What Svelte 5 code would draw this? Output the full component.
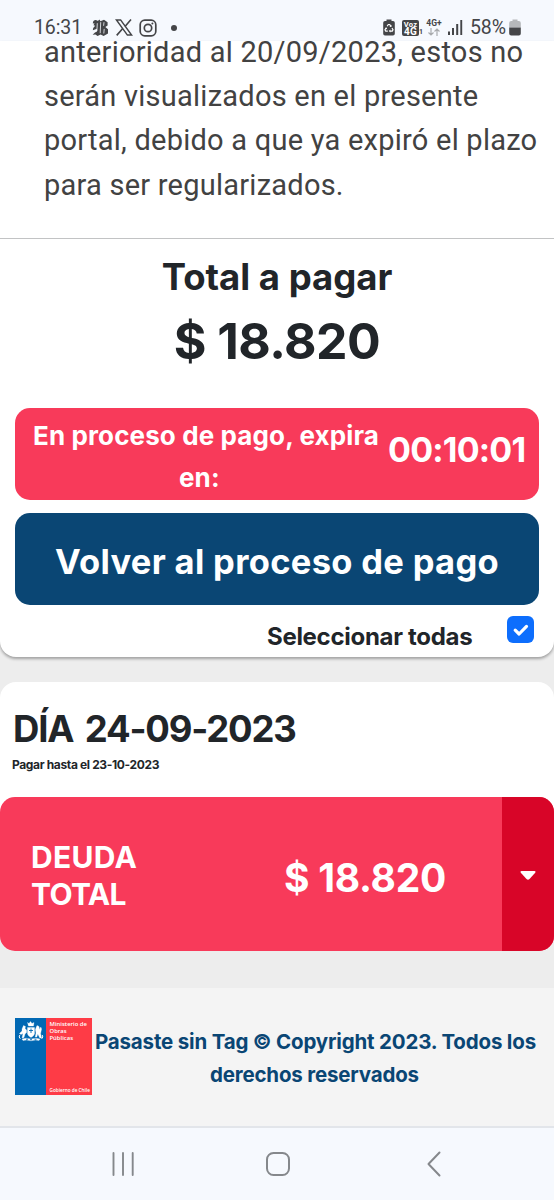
<script>
  const paragraph = [
    'anterioridad al 20/09/2023, estos no',
    'serán visualizados en el presente',
    'portal, debido a que ya expiró el plazo',
    'para ser regularizados.'
  ];
  let selected = $state(true);
</script>

<div class="screen">
  <header class="status">
    <span class="time">16:31</span>
    <svg class="news" width="17" height="18" viewBox="0 0 17 18" fill="#444548">
      <path d="M.8 4.500C1 1.500 3 .6 4.800 1.400c1.200.6 2 .2 2.800-.8l.8 1.600L12 .8l3.600 2.400v3.300L13.300 8l2.700 2.300v4.200l-4.400 2.600-3-1.600-3 1.500-2.200-1.400-2.800.2 2.400-2.400 2-1V9.800L.8 11.200 1.200 9l2-2.200-1.700-.6 1-2z" />
      <path d="M5.300 4.200 4.900 12M8.700 3.200l-.5 11M12 3.200l-.4 3.600M12.200 9.900l-.4 4.600" stroke="#f6f9fe" stroke-width=".8" fill="none" />
    </svg>
    <svg class="x" width="18" height="17" viewBox="0 0 18 17" fill="none" stroke="#444548">
      <path d="M1.400.9h4.200l11 15.200h-4.200z" stroke-width="1.500" />
      <path d="M16 .6 10 7.500M7.500 9.800 1.700 16.400" stroke-width="1.600" />
    </svg>
    <svg class="insta" width="18" height="18" viewBox="0 0 18 18" fill="none" stroke="#444548" stroke-width="1.700">
      <rect x="1.200" y="1.200" width="15.600" height="15.600" rx="4.600" />
      <circle cx="9" cy="9" r="3.700" />
      <circle cx="13.400" cy="4.600" r="1" fill="#444548" stroke="none" />
    </svg>
    <i class="dot"></i>
    <svg class="saver" width="12" height="17" viewBox="0 0 12 17">
      <path d="M3.500 2V.5h5V2H10a1.800 1.800 0 0 1 1.800 1.800v11A1.800 1.800 0 0 1 10 16.600H2A1.800 1.800 0 0 1 .2 14.800v-11A1.800 1.800 0 0 1 2 2z" fill="#444548" />
      <path d="m4.200 7.300 1.100-1.800h1.400L8 7.600M9 9l1 1.800-.7 1.300H7M4.800 12.100H2.700L2 10.800 3.100 9" fill="none" stroke="#fff" stroke-width="1.200" />
      <path d="m8.600 6.100-.3 2-1.900-.8zM7.400 10.600v3l-1.600-1.500zM1.800 9l2-.6.4 2z" fill="#fff" />
    </svg>
    <span class="volte"><b>Voz</b><b class="g">4G</b></span><span class="sim">1</span>
    <span class="net"><b>4G+</b>
      <svg width="12" height="8" viewBox="0 0 12 8" fill="none" stroke="#a8aaad" stroke-width="1.200"><path d="M3 0v7M.5 4.500 3 7l2.500-2.500M9 8V1M6.500 3.500 9 1l2.500 2.500" /></svg>
    </span>
    <svg class="signal" width="15" height="15" viewBox="0 0 15 15" fill="#444548"><path d="M0 11.500h2V15H0zM4 8h2v7H4zM8.200 4h2v11h-2z" /><path d="M12.300 0h1.900v15h-1.900z" /></svg>
    <span class="pct">58%</span>
    <svg class="battery" width="12" height="17" viewBox="0 0 12 17">
      <path d="M3.500 2V.5h5V2h1.300a2 2 0 0 1 2 2v4.500H.2V4a2 2 0 0 1 2-2z" fill="#b5b7ba" />
      <path d="M.2 8.500h11.600v6a2 2 0 0 1-2 2H2.200a2 2 0 0 1-2-2z" fill="#444548" />
    </svg>
  </header>

  <main>
    <section class="summary">
      <div class="copy">
        {#each paragraph as line, i}<p class="l{i}">{line}</p>{/each}
      </div>
      <h2>Total a pagar</h2>
      <div class="total">$ 18.820</div>
      <div class="timer">
        <div class="expires"><span>En proceso de pago, expira</span><span class="en">en:</span></div>
        <strong>00:10:01</strong>
      </div>
      <button class="back">Volver al proceso de pago</button>
      <div class="select">
        <span>Seleccionar todas</span>
        <button class="check" class:on={selected} aria-label="Seleccionar todas" onclick={() => (selected = !selected)}>
          <svg width="27" height="27" viewBox="0 0 27 27" fill="none" stroke="#fff" stroke-width="3.200" stroke-linecap="round" stroke-linejoin="round"><path d="m8.200 14.200 3.900 3.800 7.400-7.600" /></svg>
        </button>
      </div>
    </section>

    <section class="day">
      <h1>DÍA 24-09-2023</h1>
      <p>Pagar hasta el 23-10-2023</p>
    </section>
    <div class="debtwrap">
      <div class="debt">
        <div class="label"><span>DEUDA</span><span class="tot">TOTAL</span></div>
        <div class="amount">$ 18.820</div>
        <button class="toggle" aria-label="Detalle">
          <svg width="18" height="11" viewBox="0 0 18 11"><path d="M2.500 1h13q1.800.3.700 1.700l-5.700 6.300q-1.500 1.500-3 0L1.800 2.700Q.7 1.300 2.500 1z" fill="#fff" /></svg>
        </button>
      </div>
    </div>
  </main>

  <footer>
    <div class="logo">
      <div class="blue">
        <svg width="26" height="21" viewBox="0 0 26 21">
          <g fill="#fff" stroke="#fff" stroke-width=".3">
            <path d="m9.500 1.500 1.500 1 1.500-2 1.500 2 2-1-.5 3.500h-5z" />
            <path d="M9.500 6.500h7V13q-1 2.500-3.500 3.500-2.500-1-3.500-3.500z" />
            <path d="M4 8 5.500 4.500l2 1-.5 2L8.600 9v2.500L7 13l-1 3.500-2 .5 1-4.500-2 1-1.600-1L4 10zM17.400 8.500 19 4.500l2 1 .6 3 1.200-2.500.8 2-1 4.500 1 4.500h-1.800l-2-4-1 3h-1.600l.8-4z" />
            <path d="m4 18 4-.8 5 .8 5-.8 4 .8-1 1.500-3.500-.4-4.500.7-4.500-.7-3.500.4z" />
          </g>
          <path d="M11 9.500h4M13 7.500v4.500M8 18.200h2M12 18.700h2M16.500 18.200h2" stroke="#0168b3" stroke-width=".9" />
          <path d="M1.800 14q-1.500 2 .5 3.800M24.200 14q1.500 2-.5 3.800" fill="none" stroke="#fff" stroke-width="1" />
        </svg>
      </div>
      <div class="red"><p>Ministerio de<br />Obras<br />Públicas</p><small>Gobierno de Chile</small></div>
    </div>
    <div class="copyright"><span>Pasaste sin Tag © Copyright 2023. Todos los</span><span class="second">derechos reservados</span></div>
  </footer>

  <nav>
    <svg width="24" height="26" viewBox="0 0 24 26" stroke="#85888c" stroke-width="1.900" stroke-linecap="round"><path d="M2.500 2v22M12 2v22M21.700 2v22" /></svg>
    <svg class="home" width="26" height="26" viewBox="0 0 26 26" fill="none" stroke="#85888c" stroke-width="2"><rect x="2" y="2" width="22" height="22" rx="6.500" /></svg>
    <svg width="16" height="26" viewBox="0 0 16 26" fill="none" stroke="#85888c" stroke-width="2" stroke-linecap="round" stroke-linejoin="round"><path d="M13.500 1.500 2.500 13l11 11.500" /></svg>
  </nav>
</div>

<style>
  :global(body) { background: #ededed; }
  .screen { width: 554px; height: 1200px; overflow: hidden; display: flex; flex-direction: column; font-family: Inter, "Liberation Sans", sans-serif; font-weight: 700; color: #212529; background: #ededed; }
  .screen * { box-sizing: border-box; }
  p, h1, h2 { margin: 0; font-weight: inherit; }
  button { border: 0; padding: 0; font: inherit; color: inherit; display: block; }
  span { white-space: nowrap; }
  svg { flex: none; display: block; }

  .status { height: 41px; flex: none; background: #f6f9fe; display: flex; align-items: center; padding: 14px 0 0 34px; color: #444548; font-family: Roboto, sans-serif; font-weight: 400; }
  .time { font-size: 19.500px; width: 58px; line-height: 20px; letter-spacing: -.1px; }
  .x { margin-left: 6px; }
  .insta { margin-left: 6px; }
  .dot { width: 6px; height: 6px; border-radius: 50%; background: #444548; margin-left: 14px; }
  .saver { margin-left: 206px; }
  .volte { width: 17px; height: 16px; border-radius: 2px; background: #444548; color: #fff; margin-left: 7px; display: flex; flex-direction: column; align-items: center; font-size: 7.500px; line-height: 7px; padding-top: 1px; letter-spacing: .3px; }
  .volte .g { font-size: 10px; line-height: 8px; }
  .sim { font-size: 7px; width: 3px; font-weight: 700; align-self: flex-end; line-height: 9px; margin-bottom: 4px; }
  .net { margin-left: 3px; width: 18px; font-size: 8.500px; line-height: 9px; display: flex; flex-direction: column; align-items: center; }
  .signal { margin-left: 5px; }
  .pct { font-size: 19.500px; line-height: 20px; margin-left: 7px; width: 37px; letter-spacing: -.1px; }
  .battery { margin-left: 2px; }

  main { height: 947px; flex: none; }
  .summary { position: relative; height: 616px; background: #fff; border-radius: 0 0 16px 16px; box-shadow: 0 2px 3px rgba(0, 0, 0, .32); }
  .copy { height: 198px; border-bottom: 1.500px solid #c2c3c4; padding-left: 44px; color: #424242; font-family: Roboto, sans-serif; font-size: 29px; font-weight: 400; letter-spacing: .24px; overflow: hidden; }
  .copy p { line-height: 44.300px; white-space: nowrap; }
  .copy .l0 { margin-top: -11.200px; }
  h2 { font-size: 36.500px; line-height: 50px; padding-top: 13px; height: 63px; text-align: center; }
  .total { font-size: 50px; line-height: 60px; padding-top: 9px; height: 106px; text-align: center; letter-spacing: -.5px; }
  .timer { margin: 0 15px; height: 92px; border-radius: 15px; background: #f83a5a; color: #fff; display: flex; padding: 7px 0 0 18px; }
  .expires { width: 347px; display: flex; flex-direction: column; align-items: flex-start; font-size: 26px; line-height: 41.500px; letter-spacing: .12px; }
  .en { margin-left: 146px; }
  .timer strong { font-size: 34px; font-weight: 700; line-height: 46px; margin: 12px 0 0 8px; letter-spacing: -.8px; }
  .back { margin: 13px 15px 0; width: 524px; height: 92px; border-radius: 15px; background: #0a4674; color: #fff; font-size: 34.500px; padding-top: 4px; letter-spacing: .32px; }
  .select { display: flex; padding-left: 267px; font-size: 24px; letter-spacing: -.3px; }
  .select span { width: 240px; line-height: 34px; margin-top: 15px; }
  .check { width: 27px; height: 27px; margin-top: 11px; border-radius: 6px; background: #fff; }
  .check.on { background: #0d6efd; }

  .day { margin-top: 25px; height: 115px; background: #fff; border-radius: 16px 16px 0 0; padding: 22px 12px 0; }
  h1 { font-size: 36.500px; line-height: 50px; letter-spacing: -1.200px; word-spacing: 4px; padding-left: 1px; white-space: nowrap; }
  .day p { font-size: 12px; line-height: 18px; margin-top: 2px; letter-spacing: -.36px; }
  .debtwrap { background: linear-gradient(#fff 0 50%, #ededed 50%); }
  .debt { height: 153.500px; border-radius: 15px; overflow: hidden; background: #f83a5a; color: #fff; display: flex; }
  .label { padding: 42px 0 0 31px; width: 284px; display: flex; flex-direction: column; align-items: flex-start; font-size: 30px; line-height: 37px; letter-spacing: .3px; }
  .tot { letter-spacing: -.6px; }
  .amount { width: 218px; font-size: 39px; line-height: 50px; padding-top: 56px; letter-spacing: -.3px; }
  .toggle { width: 52px; background: #d80528; display: grid; place-items: center; padding-top: 4px; }

  footer { flex: none; height: 138px; background: #f4f4f4; padding: 30px 15px 0 15px; display: flex; color: #0a4674; }
  .logo { width: 77px; height: 77px; display: flex; flex: none; }
  .blue { width: 31px; background: #0168b3; padding: 3px 0 0 3px; }
  .red { width: 46px; background: #fe3b46; color: #fff; display: flex; flex-direction: column; justify-content: space-between; padding: 3px 0 2px 3.500px; font-family: "Open Sans", sans-serif; font-weight: 600; font-size: 5.900px; line-height: 7.200px; white-space: nowrap; }
  .red small { font-size: 4.700px; line-height: 6px; }
  .copyright { display: flex; flex-direction: column; align-items: flex-start; font-size: 20.500px; line-height: 32.500px; padding: 8px 0 0 3px; letter-spacing: -.18px; }
  .second { margin-left: 115px; }

  nav { flex: none; height: 74px; border-top: 2px solid #e2e5ea; background: #f6f9fe; display: flex; align-items: flex-start; padding: 23px 112px 0 111px; justify-content: space-between; }
  .home { margin-right: 5px; }
</style>
